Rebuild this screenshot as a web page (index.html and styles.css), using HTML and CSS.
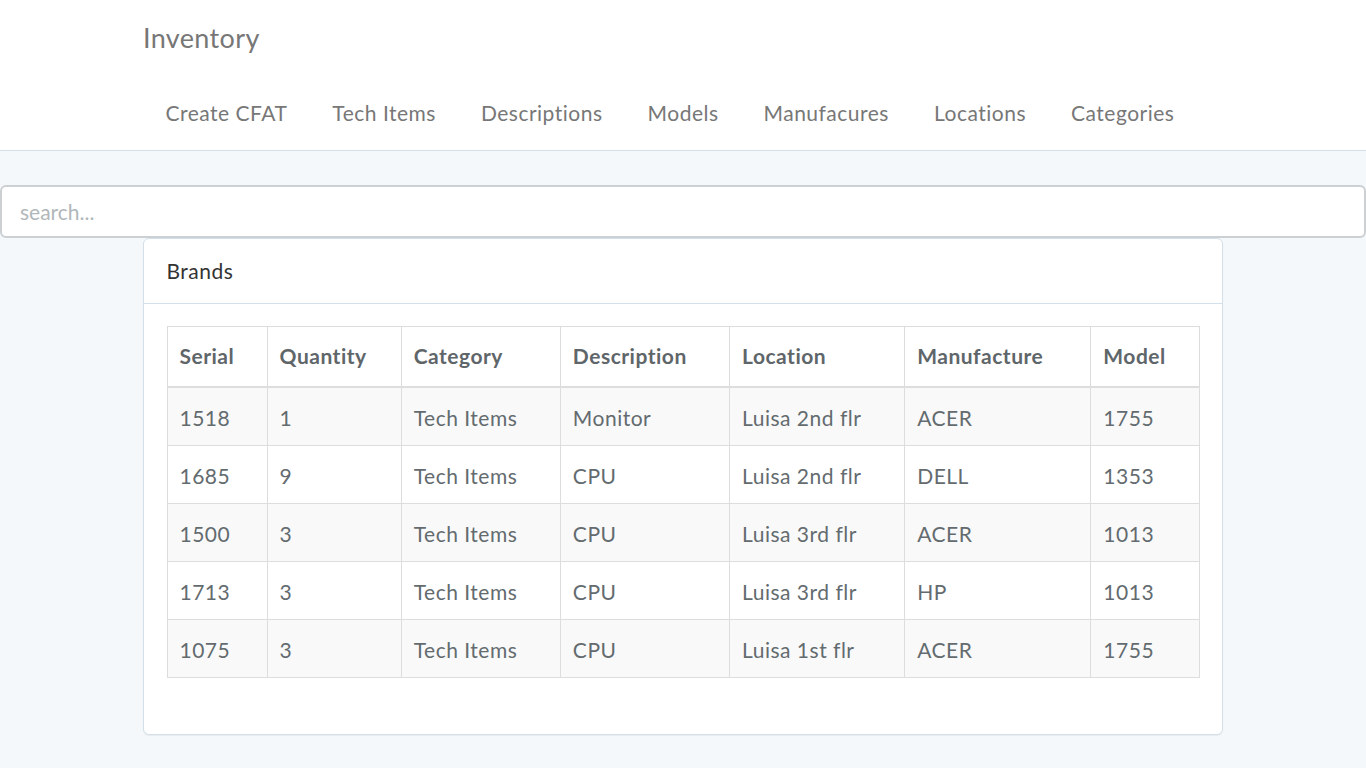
FILE: index.html
```html
<!DOCTYPE html>
<html lang="en">
<head>
<meta charset="utf-8">
<title>Inventory</title>
<link rel="stylesheet" href="styles.css">
</head>
<body>
<nav class="navbar">
  <div class="container">
    <div class="brand-row"><a class="brand" href="#">Inventory</a></div>
    <ul class="nav">
      <li><a href="#">Create CFAT</a></li>
      <li><a href="#">Tech Items</a></li>
      <li><a href="#">Descriptions</a></li>
      <li><a href="#">Models</a></li>
      <li><a href="#">Manufacures</a></li>
      <li><a href="#">Locations</a></li>
      <li><a href="#">Categories</a></li>
    </ul>
  </div>
</nav>
<main>
  <input class="search" type="text" placeholder="search...">
  <div class="container">
    <div class="panel">
      <div class="panel-heading">Brands</div>
      <div class="panel-body">
        <table class="table">
          <colgroup>
            <col class="c1"><col class="c2"><col class="c3"><col class="c4"><col class="c5"><col class="c6"><col class="c7">
          </colgroup>
          <thead>
            <tr><th>Serial</th><th>Quantity</th><th>Category</th><th>Description</th><th>Location</th><th>Manufacture</th><th>Model</th></tr>
          </thead>
          <tbody>
            <tr><td>1518</td><td>1</td><td>Tech Items</td><td>Monitor</td><td>Luisa 2nd flr</td><td>ACER</td><td>1755</td></tr>
            <tr><td>1685</td><td>9</td><td>Tech Items</td><td>CPU</td><td>Luisa 2nd flr</td><td>DELL</td><td>1353</td></tr>
            <tr><td>1500</td><td>3</td><td>Tech Items</td><td>CPU</td><td>Luisa 3rd flr</td><td>ACER</td><td>1013</td></tr>
            <tr><td>1713</td><td>3</td><td>Tech Items</td><td>CPU</td><td>Luisa 3rd flr</td><td>HP</td><td>1013</td></tr>
            <tr><td>1075</td><td>3</td><td>Tech Items</td><td>CPU</td><td>Luisa 1st flr</td><td>ACER</td><td>1755</td></tr>
          </tbody>
        </table>
      </div>
    </div>
  </div>
</main>
</body>
</html>
```
FILE: styles.css
```css
* { box-sizing: border-box; }
html, body { margin: 0; padding: 0; }
body {
  background: #f5f8fa;
  font-family: "Lato", "Liberation Sans", sans-serif;
  font-size: 21px;
  line-height: 1.6;
  letter-spacing: 0.5px;
  color: #636b6f;
}
a { text-decoration: none; color: inherit; }

.container {
  width: 1125px;
  margin: 0 auto;
  padding: 0 22.5px;
}

.navbar {
  background: #fff;
  border-bottom: 1.5px solid #d3e0e9;
  margin-bottom: 34px;
}
.brand-row {
  height: 75px;
  display: flex;
  align-items: center;
}
.brand {
  font-size: 27px;
  color: #777;
  line-height: 30px;
  letter-spacing: 0.35px;
}
.nav {
  list-style: none;
  margin: 0;
  padding: 0;
  display: flex;
}
.nav a {
  display: block;
  padding: 22.5px 22.5px;
  line-height: 30px;
  color: #777;
}

.search {
  display: block;
  width: 100%;
  height: 53px;
  margin: 0;
  padding: 9px 18px;
  border: 2px solid #ccd0d2;
  border-radius: 6px;
  background: #fff;
  font-family: inherit;
  font-size: 21px;
  letter-spacing: normal;
  color: #555;
  outline: none;
}
.search::placeholder { color: #b1b7ba; }

.panel {
  background: #fff;
  border: 1.5px solid #d3e0e9;
  border-radius: 6px;
  margin-bottom: 33px;
  box-shadow: 0 1px 1px rgba(0, 0, 0, 0.05);
}
.panel-heading {
  padding: 15px 22.5px;
  border-bottom: 1.5px solid #d3e0e9;
  color: #333;
}
.panel-body { padding: 22.5px; }

.table {
  width: 100%;
  table-layout: fixed;
  border-collapse: collapse;
  margin-bottom: 33px;
}
.c1 { width: 100px; }
.c2 { width: 134px; }
.c3 { width: 159px; }
.c4 { width: 169px; }
.c5 { width: 175px; }
.c6 { width: 186px; }
.c7 { width: 108px; }
.table th, .table td {
  border: 1px solid #ddd;
  padding: 12px;
  text-align: left;
  vertical-align: top;
  line-height: 33px;
  white-space: nowrap;
}
.table td { padding-top: 13px; padding-bottom: 11px; }
.table th {
  font-weight: 700;
  color: #5f666a;
  padding-top: 12px;
  padding-bottom: 14px;
  border-bottom: 2px solid #ddd;
}
.table tbody tr:nth-child(odd) { background: #f9f9f9; }
```
